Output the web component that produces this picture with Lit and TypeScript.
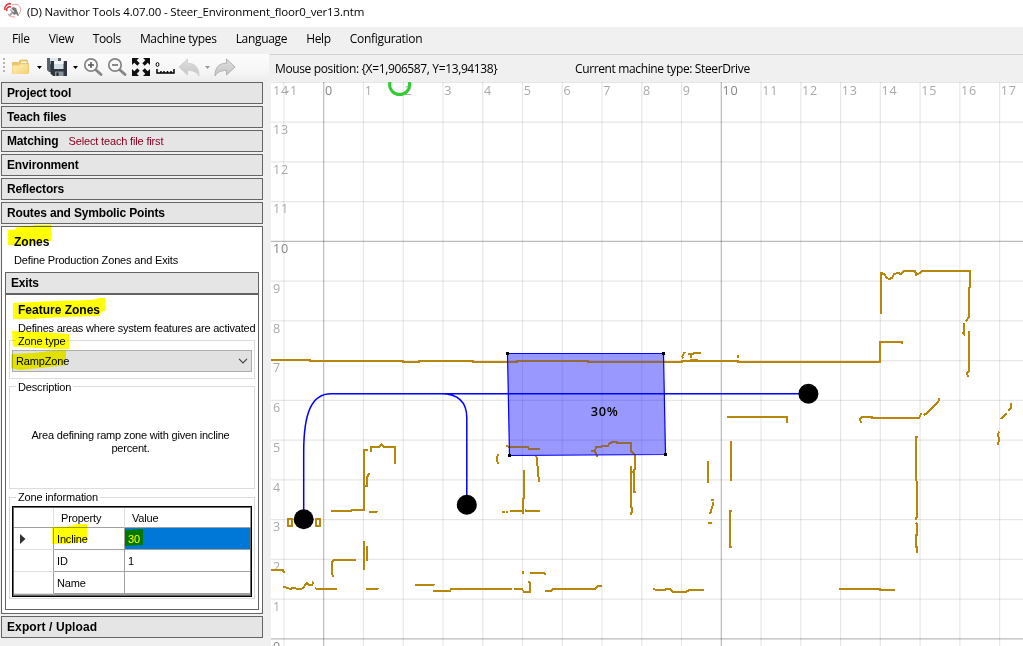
import { LitElement, html, css, svg } from "lit";
import { customElement } from "lit/decorators.js";

const OX = 323.7, OY = 638.8, STEP = 39.76;
const range = (a: number, b: number) => Array.from({ length: b - a + 1 }, (_, i) => a + i);

const WALLS = [
  "271,360 310,360 310,361 403,361 403,362 419,362 419,361 473,361 473,362 517,362 517,361 588,361 588,362 682,362 682,361 738,361 738,362 880,362 880,342 902,342 902,344",
  "738,355 738,358",
  "881,313.5 881,273 884,274 887,278 889,279 892,278 894,274 898,273 901,274 903.5,271 915,271 916.3,275 919,273.5 922,271 970,271 970,287 969,288 969,317 966,321.3",
  "964,323 964,331.5 963,333 965,335.6",
  "969,331 969,371 967,373 968,376.7",
  "727,417 787,417 787,423",
  "861,423 860,419.3 862,417 872,417 872,418 919,418 921.3,413.3",
  "923.7,415 926.7,413.3 938.3,401.7 939.3,398.3",
  "1011,403 1011,408 1008.7,410.7",
  "1006.3,413.3 1003,416.7 1001,419",
  "999.3,432 998,434 999,439.5 998,444.7",
  "731,441 731,481",
  "732,511 730,511 730,547 732,547",
  "918,437 916,437 916,480 917,482 917,517 916,517.5 916,520",
  "916,522.7 917,523.5 917,534.7 916,534.7 916,546.7 917,546.7 917,553",
  "839,589 880,589 880,590 895,590",
  "683.3,358.5 682.3,356.5 683.7,353.3 685.7,352",
  "688,354 692.7,354 694.3,353 701,353",
  "691,354.3 691,357.7",
  "690,360 698,360",
  "708,461 708,483",
  "711.3,499.5 713.5,499.5",
  "713,502.3 713,504.3 710,514.3",
  "708,522.5 711.7,522.5",
  "506,446 510,447 528,447 529,449 540,449",
  "498.5,454.3 497,457 497,461.3 498.3,463.7",
  "536,456 537,458.3 538,473.3 539.3,481.7",
  "524,470 524,498.3 523,499.3 523,513.7",
  "502.3,512 504.7,512",
  "506.3,512 508,512",
  "510,511 520.7,511 523,512",
  "525,510.3 526.3,511 540,511",
  "597,456.7 596,453 594,451.3 591.3,451.3",
  "595,451.3 596,447.3 601,447 602,446 607.7,446 610,443 613,442 616.7,442 617.3,443 631,443 631,451 634,454 635,455.7 635,469 634,470 634,492 636,492",
  "631,466 631,506.7 632,507.7 632,512 631,512.7 631,515.3",
  "632,472 634,472",
  "523,570.7 523,574",
  "530,573 544,573 545.7,574.3",
  "528.3,581.3 530,583.3 530,592 524.3,592 521.7,589 514,589",
  "512,589 451,589 450,591 433,591",
  "415,585 433.5,585 434.5,584",
  "545,591 551,591 553,589 595,589 597.7,586 601.7,586",
  "653.3,589 656.7,590 660,589.5 665,590 665.7,589 670,589 673,592 686,592 689,590 703.7,590",
  "271,570 282.7,570 284.3,573",
  "283.3,587 288.3,588 290,589 293.3,588 299.3,589 303.3,588.3 305,585 307,583.3 309.3,585 312.3,585 313.3,581.7",
  "315,588 317.3,589 337,589",
  "366.3,589 377.3,589 378.5,588",
  "333,577.3 332,573.3 332.3,561.3 333.7,560 356,560",
  "364,541 364,569.7",
  "367,546 367,560.7",
  "331,511 351,511 352.3,510 364,510 364,450 368,450",
  "365,485.7 367,485.7 367.3,476.7 369.3,473.3",
  "371,452 371,447 379,447 381.7,444.5 384,447 395,447 395,463.7",
  "369,512 376,512 377.7,511",
  "288,519 292,519 292,526 288,526 288,518",
  "316,519 320,519 320,526 316,526 316,518",
];
const ZONE = "507.5,353.5 663.5,353.5 665.5,454.5 509.5,455.5";

@customElement("nav-map")
class NavMap extends LitElement {
  static styles = css`
    :host { display: block; overflow: hidden; background: #fff; }
    svg { display: block; }
    .minor { stroke: #000; stroke-opacity: 0.095; stroke-width: 1.2; }
    .major { stroke: #000; stroke-opacity: 0.27; stroke-width: 1.2; }
    text { font-family: "Open Sans", sans-serif; font-size: 12.6px; letter-spacing: 0.7px; fill: #aaa; }
    text.strong { fill: #858585; }
    text.pct { fill: #000; font-weight: 600; letter-spacing: 0.7px; font-size: 12.8px; }
    .wall { fill: none; stroke: #b8860b; stroke-width: 2; shape-rendering: crispEdges; }
    .route { fill: none; stroke: #00f; stroke-width: 1.5; }
    .under { fill: #00f; fill-opacity: 0.25; }
    .zone { fill: #00f; fill-opacity: 0.2; stroke: #00f; stroke-width: 1.2; }
    .mouse { fill: none; stroke: #32cd32; stroke-width: 3; }
  `;
  render() {
    return html`<svg width="752" height="564" viewBox="271 82 752 564">
      ${range(-1, 17).map((n) => { const x = OX + n * STEP; return svg`
        <line class=${n % 10 ? "minor" : "major"} x1=${x} x2=${x} y1="82" y2="646"></line>
        <text class=${n % 10 ? "" : "strong"} x=${x + 1.2} y="95.4">${n}</text>`; })}
      ${range(0, 14).map((n) => { const y = OY - n * 39.75; return svg`
        <line class=${n % 10 ? "minor" : "major"} x1="271" x2="1023" y1=${y} y2=${y}></line>
        <text class=${n % 10 ? "" : "strong"} x="273" y=${n === 14 ? 95.4 : y + 11.7}>${n}</text>`; })}
      <polygon class="under" points=${ZONE}></polygon>
      ${WALLS.map((p) => svg`<polyline class="wall" points=${p}></polyline>`)}
      <polygon class="zone" points=${ZONE}></polygon>
      <path class="route" d="M303.7 519V452C303.7 412 312 393.7 331 393.7H808M441 393.7C459 393.7 466.8 403 466.8 418V504"></path>
      <circle cx="303.7" cy="519.3" r="10"></circle>
      <circle cx="466.8" cy="504.7" r="10"></circle>
      <circle cx="808.4" cy="393.7" r="10"></circle>
      <rect x="506" y="352" width="3" height="3"></rect><rect x="662" y="352" width="3" height="3"></rect>
      <rect x="664" y="453" width="3" height="3"></rect><rect x="508" y="454" width="3" height="3"></rect>
      <circle class="mouse" cx="399.6" cy="84.5" r="10"></circle>
      <text class="pct" x="590.8" y="416">30%</text>
    </svg>`;
  }
}

@customElement("tool-strip")
class ToolStrip extends LitElement {
  static styles = css`
    :host { display: block; background: linear-gradient(#fcfcfc, #f6f6f6 60%, #ececec); border-radius: 0 3px 3px 0; }
    svg { display: block; }
  `;
  render() {
    return html`<svg width="269" height="28" viewBox="0 54 269 28">
      <defs>
        <linearGradient id="fold" x1="0" y1="0" x2="1" y2="1"><stop offset="0" stop-color="#fff0b4"></stop><stop offset="1" stop-color="#f3d175"></stop></linearGradient>
        <linearGradient id="arr" x1="0" y1="0" x2="0" y2="1"><stop offset="0" stop-color="#dedede"></stop><stop offset="1" stop-color="#c6c6c6"></stop></linearGradient>
      </defs>
      <path d="M3 58h2v2h-2zM3 62h2v2h-2zM3 66h2v2h-2zM3 70h2v2h-2z" fill="#b4b4b4"></path>
      <path d="M12.500 73.500V62.500h7V61q0-1 1-1h6q1 0 1 1v2.500h1v9q0 1-1 1z" fill="#edc768" stroke="#dfb458" stroke-width=".7"></path>
      <path d="M21 61.500h5.500v1.500H21z" fill="#fff"></path>
      <path d="M12.500 65.500h6.500l1-1.200h8.500v8.700q0 1-1 1H13.500q-1 0-1-1z" fill="url(#fold)"></path>
      <path d="M37 66h5l-2.500 3z M73 66h5l-2.500 3z"></path>
      <path d="M205 66h5l-2.500 3z" fill="#9a9a9a"></path>
      <path d="M47 58h14v14H49l-2-2z" fill="#5a626c"></path>
      <path d="M50 58h8v6h-8z" fill="#dfe6ed"></path>
      <path d="M50.500 61h16.500v15H53l-2.500-2.500z" fill="#30363f"></path>
      <path d="M54 61h9.500v8H54z" fill="#d2dde8"></path><path d="M54 61h9.500v3H54z" fill="#f3f6f9"></path>
      <path d="M55 71.500h8.500V76H55z" fill="#8b939d"></path><path d="M56.500 72.500h2V76h-2z" fill="#20242b"></path>
      <g fill="none" stroke="#858585">
        <circle cx="91" cy="65" r="6.200" stroke-width="1.700" fill="#fafafa"></circle><path d="M88 65h6M91 62v6" stroke="#555" stroke-width="1.500"></path><path d="M96 70l5 4.500" stroke-width="2.800" stroke-linecap="round"></path>
        <circle cx="115" cy="65" r="6.200" stroke-width="1.700" fill="#fafafa"></circle><path d="M112 65h6" stroke="#666" stroke-width="1.500"></path><path d="M120 70l5 4.500" stroke-width="2.800" stroke-linecap="round"></path>
      </g>
      <path d="M132 58h7l-2.300 2.300 3 3-2.400 2.400-3-3L132 65zM150 58v7l-2.300-2.300-3 3-2.400-2.400 3-3L143 58zM132 76v-7l2.300 2.300 3-3 2.400 2.400-3 3L139 76zM150 76h-7l2.300-2.300-3-3 2.400-2.400 3 3L150 69z" fill="#101010"></path>
      <ellipse cx="157.500" cy="64.500" rx="1.400" ry="2" fill="none" stroke="#000"></ellipse>
      <path d="M157 69v4h17v-4M161 73v-2M164 73v-2M167.500 73v-2M171 73v-2" fill="none" stroke="#000" stroke-width="1.500"></path>
      <path d="M179 67l8.500-8v4.200C195 63.200 199 67.500 199 76c-2.500-4-5.500-5.500-11.500-5.500V75z" fill="url(#arr)" stroke="#ccc" stroke-width=".8"></path>
      <path d="M235 67l-8.500-8v4.200C219 63.200 215 67.500 215 76c2.500-4 5.500-5.500 11.500-5.500V75z" fill="url(#arr)" stroke="#a4a4a4" stroke-width=".8"></path>
    </svg>`;
  }
}

@customElement("app-root")
class AppRoot extends LitElement {
  static styles = css`
    :host { display: flex; flex-direction: column; width: 1023px; height: 646px; overflow: hidden; background: #f0f0f0; color: #000; font-family: "Liberation Sans", sans-serif; font-size: 11px; letter-spacing: -0.16px; box-sizing: border-box; }
    * { box-sizing: border-box; }
    .title { height: 27px; flex: none; background: #fff; display: flex; align-items: flex-start; padding: 2px 0 0 4px; gap: 5px; }
    .title span, .menu, .status { font-family: "Open Sans", sans-serif; font-size: 12px; }
    .title span { line-height: 20px; font-size: 11.5px; letter-spacing: -0.15px; white-space: pre; }
    .menu { height: 27px; flex: none; display: flex; padding-left: 12px; line-height: 24px; gap: 19px; letter-spacing: -0.32px; white-space: nowrap; }
    .body { flex: 1; display: grid; grid-template-columns: 271px 752px; grid-template-rows: 28px 564px; }
    .strip { width: 269px; }
    .status { border-top: 1px solid #d2d2d2; display: grid; grid-template-columns: 300px 1fr; line-height: 27px; letter-spacing: -0.37px; margin-left: -1px; padding-left: 5px; white-space: nowrap; }
    .side { position: relative; padding: 0 8px 0 1px; display: flex; flex-direction: column; gap: 2px; }
    .head { height: 22px; flex: none; border: 1px solid #646464; background: #e5e5e5; padding-left: 5px; font-size: 12px; font-weight: bold; line-height: 20px; white-space: nowrap; }
    .head.wide { letter-spacing: 0.1px; }
    .head i { font-style: normal; font-weight: normal; font-size: 11px; color: #8b0020; margin-left: 7px; }
    .panel { height: 388px; flex: none; border: 1px solid #646464; background: #fff; padding: 7px 3px 3px; display: flex; flex-direction: column; }
    .h { font-size: 12px; font-weight: bold; line-height: 16px; height: 18px; padding-left: 9px; letter-spacing: 0; white-space: nowrap; }
    .p { line-height: 16px; padding-left: 9px; height: 20px; white-space: nowrap; }
    .feature { flex: 1; border: 1px solid #646464; padding: 7px 3px 0; display: flex; flex-direction: column; }
    .feature .p { height: 15px; letter-spacing: -0.21px; }
    .group { border: 1px solid #dcdcdc; flex: none; display: flex; flex-direction: column; }
    .cap { background: #fff; align-self: flex-start; line-height: 13px; height: 13px; margin: -6px 0 0 6px; padding: 0 2px; }
    .g1 { height: 39px; margin-top: 5px; } .g2 { height: 103px; margin-top: 7px; } .g3 { height: 102px; margin-top: 8px; }
    .g3 .cap { margin-top: -7px; }
    .combo { margin: 2px 2px 0; height: 22px; border: 1px solid #adadad; background: #e1e1e1; display: flex; align-items: center; justify-content: space-between; padding: 0 3px 0 3px; }
    .desc { flex: 1; display: flex; align-items: center; justify-content: center; text-align: center; line-height: 13px; letter-spacing: -0.19px; padding: 2px 20px 0 17px; }
    .table { margin: 2px 2px 0; width: 240px; height: 91px; border: 1px solid #000; outline: 1px solid #0005; outline-offset: -2px; background: #a0a0a0; padding: 1px 1px 2px; display: grid; grid-template-columns: 40px 71px 126px; grid-template-rows: 20px 22px 22px 22px; }
    .table div { background: #fff; border-right: 1px solid #a0a0a0; border-bottom: 1px solid #a0a0a0; padding-left: 3px; display: flex; align-items: center; padding-top: 1px; }
    .table .th { padding-left: 7px; border-right-color: #e0e0e0; }
    .table .rh { padding-left: 6px; border-bottom-color: #e0e0e0; }
    .table .sel { background: #0078d7; color: #fff; }
    .marks { position: absolute; left: 0; top: 0; mix-blend-mode: multiply; pointer-events: none; }
  `;
  render() {
    return html`
      <div class="title">
        <svg width="18" height="18" viewBox="4 2 18 18" fill="none">
          <path d="M5 10a5 5 0 0 1 6-6M7 11a3 3 0 0 1 4-4" stroke="#e0303c" stroke-width="1.500"></path>
          <path d="M6 5l4-2" stroke="#e0303c"></path>
          <path d="M12 5q6-2 8 2 2 5-3 9M8 14q3 4 7 3" stroke="#f09a9f"></path>
          <path d="M9 16l5-5" stroke="#aaa" stroke-width="2"></path>
          <path d="M10 10l3-3 3 1 3 8-3-2-2 1-2-3z" fill="#777"></path>
          <path d="M11 9l3 3" stroke="#ddd" stroke-width="1.500"></path>
        </svg>
        <span>(D) Navithor Tools 4.07.00 - Steer_Environment_floor0_ver13.ntm</span>
      </div>
      <div class="menu">${["File", "View", "Tools", "Machine types", "Language", "Help", "Configuration"].map((m) => html`<span>${m}</span>`)}</div>
      <div class="body">
        <tool-strip class="strip"></tool-strip>
        <div class="status"><span>Mouse position: {X=1,906587, Y=13,94138}</span><span>Current machine type: SteerDrive</span></div>
        <div class="side">
          <div class="head">Project tool</div>
          <div class="head">Teach files</div>
          <div class="head">Matching <i>Select teach file first</i></div>
          <div class="head">Environment</div>
          <div class="head">Reflectors</div>
          <div class="head">Routes and Symbolic Points</div>
          <div class="panel">
            <div class="h">Zones</div>
            <div class="p">Define Production Zones and Exits</div>
            <div class="head">Exits</div>
            <div class="feature">
              <div class="h">Feature Zones</div>
              <div class="p">Defines areas where system features are activated</div>
              <div class="group g1"><span class="cap">Zone type</span>
                <div class="combo"><span>RampZone</span><svg width="10" height="6" viewBox="0 0 10 6"><path d="M1 .8l4 4 4-4" fill="none" stroke="#444" stroke-width="1.200"></path></svg></div>
              </div>
              <div class="group g2"><span class="cap">Description</span><div class="desc">Area defining ramp zone with given incline percent.</div></div>
              <div class="group g3"><span class="cap">Zone information</span>
                <div class="table">
                  <div class="th"></div><div class="th">Property</div><div class="th">Value</div>
                  <div class="rh"><svg width="6" height="10" viewBox="0 0 6 10"><path d="M0 0l5.500 5L0 10z" fill="#333"></path></svg></div><div>Incline</div><div class="sel">30</div>
                  <div class="rh"></div><div>ID</div><div>1</div>
                  <div class="rh"></div><div>Name</div><div></div>
                </div>
              </div>
            </div>
          </div>
          <div class="head wide">Export / Upload</div>
          <svg class="marks" width="271" height="564" viewBox="0 82 271 564" fill="#ff0">
            <path d="M8 230L15 229.500 16 227.500 33 226 34 225H51V241L35 243 25 245H8z"></path>
            <path d="M13 303L55 301 91 300 100 298H105V311L101 312 100 316 60 317 32 319H13z"></path>
            <path d="M12 331L36 331.500 69 334V349H55L13 346.500z"></path>
            <path d="M11 354L34 353 50 351 66 350.500V365L50 367 20 370 11 368z"></path>
            <path d="M52 527L69 526.500 76 524H87V541.500L67 544H52z"></path>
            <path d="M125 530L143 529V545L125 546z"></path>
          </svg>
        </div>
        <nav-map></nav-map>
      </div>`;
  }
}
